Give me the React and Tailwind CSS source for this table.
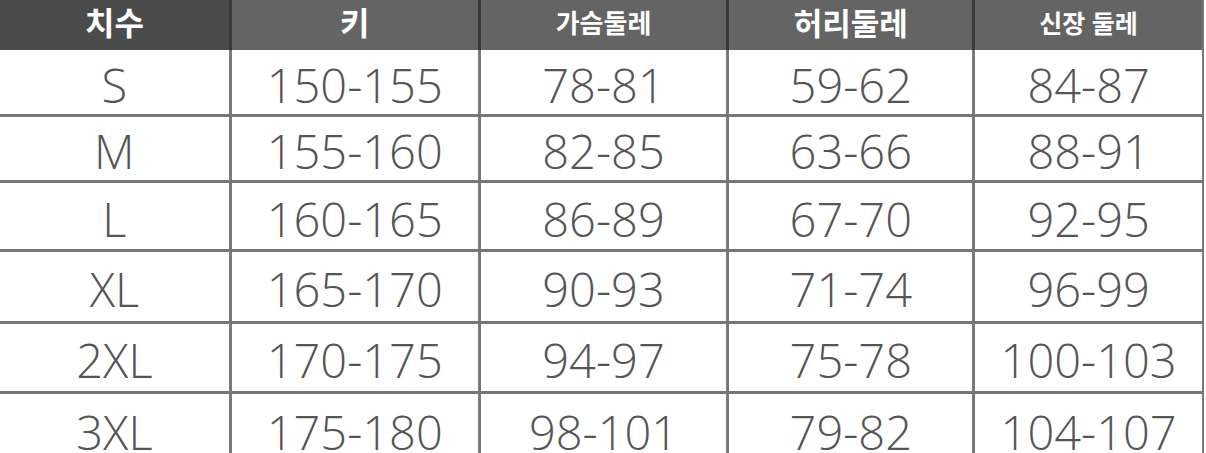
const COLS = [
  { w: 'w-[229px]', head: '치수', size: 'text-[32px]', bg: 'bg-[#4b4b4b]' },
  { w: 'w-[249px]', head: '키', size: 'text-[32px]', bg: 'bg-[#646464]' },
  { w: 'w-[249px]', head: '가슴둘레', size: 'text-[26px]', bg: 'bg-[#646464]' },
  { w: 'w-[246px]', head: '허리둘레', size: 'text-[31px]', bg: 'bg-[#646464]' },
  { w: 'w-[230px]', head: '신장 둘레', size: 'text-[25px]', bg: 'bg-[#646464]' },
]

const ROWS = [
  { h: 'h-[67px]', cells: ['S', '150-155', '78-81', '59-62', '84-87'] },
  { h: 'h-[66px]', cells: ['M', '155-160', '82-85', '63-66', '88-91'] },
  { h: 'h-[69px]', cells: ['L', '160-165', '86-89', '67-70', '92-95'] },
  { h: 'h-[72px]', cells: ['XL', '165-170', '90-93', '71-74', '96-99'] },
  { h: 'h-[70px]', cells: ['2XL', '170-175', '94-97', '75-78', '100-103'] },
  { h: 'h-[70px]', cells: ['3XL', '175-180', '98-101', '79-82', '104-107'], last: true },
]

function HeaderRow() {
  return (
    <div className="flex h-[50px]">
      {COLS.map((c, i) => (
        <div
          key={i}
          className={`${c.w} ${c.bg} ${c.size} flex items-start justify-center pt-[2px] font-bold leading-[42px] text-white ${i > 0 ? 'border-l-[3px] border-[#3a3a3a]' : ''}`}
        >
          {c.head}
        </div>
      ))}
    </div>
  )
}

function DataRow({ row }) {
  return (
    <div className={`flex ${row.h} ${row.last ? '' : 'border-b-[3px] border-[#767676]'}`}>
      {row.cells.map((v, i) => (
        <div
          key={i}
          className={`${COLS[i].w} flex items-center justify-center pt-[6px] font-['Open_Sans','Noto_Sans',sans-serif] text-[47px] font-light leading-none text-[#555555] ${i > 0 ? 'border-l-[3px] border-[#7a7a7a]' : ''}`}
        >
          {v}
        </div>
      ))}
    </div>
  )
}

export default function App() {
  return (
    <div
      className="h-[453px] w-[1206px] overflow-hidden bg-white"
      style={{ fontFamily: '"Noto Sans", "Noto Sans CJK KR", sans-serif' }}
    >
      <div className="w-[1204px] border-r-[2px] border-[#7a7a7a]">
        <HeaderRow />
        {ROWS.map((r, i) => (
          <DataRow key={i} row={r} />
        ))}
      </div>
    </div>
  )
}
